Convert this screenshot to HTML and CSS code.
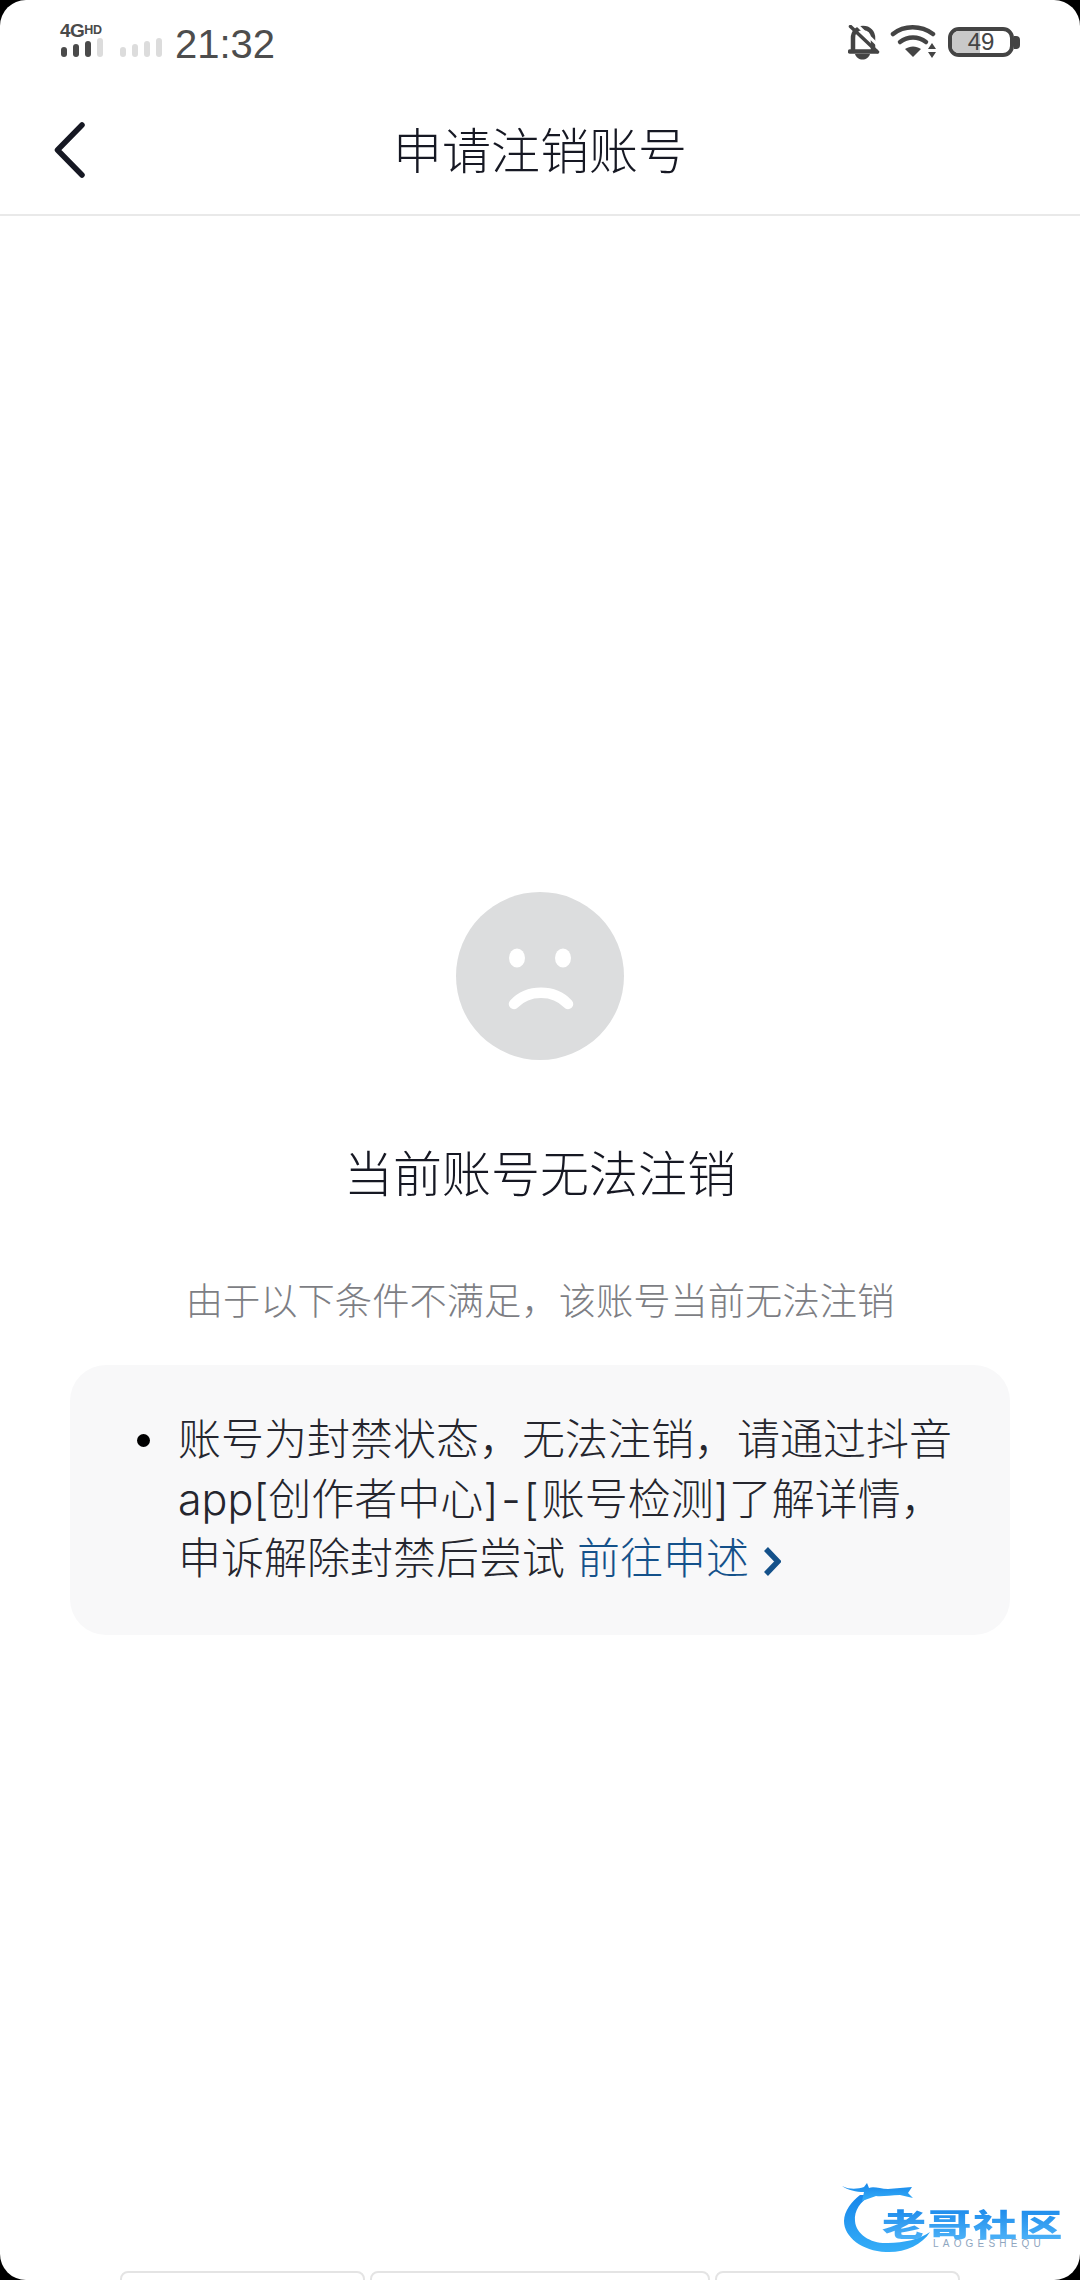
FILE: index.html
```html
<!DOCTYPE html>
<html lang="zh-CN">
<head>
    <meta charset="UTF-8">
    <title>申请注销账号</title>
    <link rel="stylesheet" href="styles.css">
</head>
<body>
    <div class="screen">
        <!-- Status bar -->
        <div class="status-bar">
            <div class="status-left">
                <div class="net">
                    <div class="net-label">4G<span class="net-hd">HD</span></div>
                    <div class="bars">
                        <i class="bar b1"></i><i class="bar b2"></i><i class="bar b3"></i><i class="bar b4 off"></i>
                    </div>
                </div>
                <div class="bars bars-second">
                    <i class="bar b1 off"></i><i class="bar b2 off"></i><i class="bar b3 off"></i><i class="bar b4 off"></i>
                </div>
                <span class="time">21:32</span>
            </div>
            <div class="status-right">
                <svg class="icon-bell" width="32" height="35" viewBox="0 0 32 35">
                    <path d="M5 25V13C5 7 9 3 15 3s10 4 10 10v12" fill="none" stroke="#444" stroke-width="4.5"/>
                    <path d="M2 26.5h26" stroke="#444" stroke-width="4.5" stroke-linecap="round"/>
                    <path d="M7 29h15c-1 3.5-4 5.5-7.5 5.5S8 32.5 7 29z" fill="#444"/>
                    <path d="M8 -1l26 25" stroke="#fff" stroke-width="3"/>
                    <path d="M2.5 1.5L29.5 27" stroke="#444" stroke-width="3.5" stroke-linecap="round"/>
                </svg>
                <svg class="icon-wifi" width="47" height="36" viewBox="0 0 47 36">
                    <path d="M3 10C14 1 31 1 43 10" fill="none" stroke="#444" stroke-width="4.5" stroke-linecap="round"/>
                    <path d="M10 18c8-6 18-6 26 0" fill="none" stroke="#444" stroke-width="4.5" stroke-linecap="round"/>
                    <path d="M15 25c5-3.5 11-3.5 16 0l-8 8z" fill="#444"/>
                    <path d="M42 19l4 6h-8zM42 34l-4-6h8z" fill="#444"/>
                </svg>
                <div class="battery">
                    <div class="battery-body">
                        <div class="battery-level"></div>
                        <span class="battery-num">49</span>
                    </div>
                    <div class="battery-cap"></div>
                </div>
            </div>
        </div>

        <!-- Title bar -->
        <div class="nav-bar">
            <svg class="back" width="36" height="60" viewBox="0 0 36 60">
                <path d="M30 5L5.5 30 30 55" fill="none" stroke="#161823" stroke-width="5.5" stroke-linecap="round" stroke-linejoin="round"/>
            </svg>
            <h1 class="nav-title">申请注销账号</h1>
        </div>

        <div class="content">
            <svg class="face" width="168" height="168" viewBox="0 0 168 168">
                <circle cx="84" cy="84" r="84" fill="#dcddde"/>
                <ellipse cx="61" cy="66" rx="8" ry="9.5" fill="#fff"/>
                <ellipse cx="107" cy="66" rx="8" ry="9.5" fill="#fff"/>
                <path d="M58 112C72 97 98 97 112 112" fill="none" stroke="#fff" stroke-width="10.5" stroke-linecap="round"/>
            </svg>
            <h2 class="result-title">当前账号无法注销</h2>
            <p class="result-desc">由于以下条件不满足，该账号当前无法注销</p>
            <div class="reason-card">
                <ul class="reason-list">
                    <li><div>账号为封禁状态，无法注销，请通过抖音<br>app[创作者中心<span class="sep">]-[</span>账号检测]了解详情，<br>申诉解除封禁后尝试 <a class="appeal-link">前往申述<svg class="chevron" width="18" height="31" viewBox="0 0 18 31"><path d="M3 3l12 12.5L3 28" fill="none" stroke="#14518a" stroke-width="5.5"/></svg></a></div></li>
                </ul>
            </div>
        </div>

        <!-- Cut off by the bottom edge of the screen -->
        <div class="bottom-tabs">
            <div class="tab tab-a"></div>
            <div class="tab tab-b"></div>
            <div class="tab tab-c"></div>
        </div>

        <div class="watermark">
            <svg class="dragon" width="90" height="72" viewBox="0 0 90 72">
                <defs>
                    <linearGradient id="dragonBlue" x1="0" y1="0" x2="0" y2="1">
                        <stop offset="0" stop-color="#1786ea"/>
                        <stop offset="1" stop-color="#35aef8"/>
                    </linearGradient>
                </defs>
                <path d="M30 12C18 18 12 28 13 38c1 14 17 23 33 22 16 0 32-4 42-11-8 13-26 21-44 20C20 68 2 54 2 38c0-10 8-20 16-26z" fill="url(#dragonBlue)"/>
                <path d="M0 3c8 4 16 3 22 1l3-4 2 5c5-2 11 1 19 1l24-2-4 6 5 5-13-3c-10 0-18 2-24 1l-14 5 2-9C14 9 6 7 0 3z" fill="url(#dragonBlue)"/>
            </svg>
            <div class="wm-text">
                <div class="wm-name">老哥社区</div>
                <div class="wm-sub">LAOGESHEQU</div>
            </div>
        </div>
    </div>
</body>
</html>
```

FILE: styles.css
```css
* {
    box-sizing: border-box;
    margin: 0;
    padding: 0;
}

body {
    width: 1080px;
    height: 2280px;
    background-color: #000;
    overflow: hidden;
    font-family: Inter, "Noto Sans CJK SC", sans-serif;
}

.screen {
    position: relative;
    width: 1080px;
    height: 2280px;
    background-color: #fff;
    border-radius: 26px;
    overflow: hidden;
    display: flex;
    flex-direction: column;
}

/* Status bar */
.status-bar {
    height: 85px;
    padding: 23px 60px 0 60px;
    display: flex;
    justify-content: space-between;
    align-items: flex-start;
    color: #4a4a4a;
}

.status-left {
    display: flex;
    align-items: flex-start;
}

.net {
    width: 59px;
}

.net-label {
    font-family: "Liberation Sans", sans-serif;
    font-weight: 700;
    font-size: 19px;
    line-height: 15px;
    letter-spacing: -0.5px;
    white-space: nowrap;
    color: #4a4a4a;
}

.net-hd {
    font-size: 12.5px;
    vertical-align: 3px;
}

.bars {
    display: flex;
    align-items: flex-end;
    gap: 6px;
    height: 19px;
    padding-left: 1px;
}

.bars-second {
    width: 56px;
    margin-top: 15px;
}

.bar {
    display: block;
    width: 6px;
    border-radius: 3px;
    background-color: #4a4a4a;
}

.bar.off {
    background-color: #dcdcdc;
}

.b1 { height: 10px; }
.b2 { height: 13px; }
.b3 { height: 16px; }
.b4 { height: 19px; }

.time {
    font-family: "Liberation Sans", sans-serif;
    font-size: 40px;
    line-height: 40px;
    color: #4d4d4d;
    margin-top: 1px;
}

.status-right {
    display: flex;
    align-items: center;
    height: 36px;
    margin-top: 1px;
}

.icon-bell {
    margin-right: 10px;
}

.icon-wifi {
    margin-right: 11px;
}

.battery {
    display: flex;
    align-items: center;
}

.battery-body {
    position: relative;
    width: 66px;
    height: 30px;
    border: 4px solid #444;
    border-radius: 11px;
    overflow: hidden;
}

.battery-level {
    width: 49%;
    height: 100%;
    background-color: #c9c9c9;
}

.battery-num {
    position: absolute;
    top: 0;
    left: 0;
    width: 100%;
    text-align: center;
    font-family: "Liberation Sans", sans-serif;
    font-size: 24px;
    line-height: 22px;
    color: #444;
}

.battery-cap {
    width: 6px;
    height: 13px;
    background-color: #444;
    border-radius: 0 4px 4px 0;
}

/* Title bar */
.nav-bar {
    position: relative;
    height: 131px;
    border-bottom: 2px solid #e9e9e9;
    display: flex;
    align-items: center;
    justify-content: center;
}

.back {
    position: absolute;
    left: 52px;
    top: 35px;
}

.nav-title {
    margin-top: 5px;
    font-size: 49px;
    font-weight: 300;
    color: #161823;
    line-height: 60px;
}

/* Result */
.content {
    flex: 1;
    padding-top: 676px;
    display: flex;
    flex-direction: column;
    align-items: center;
}

.result-title {
    margin-top: 83px;
    font-size: 49px;
    font-weight: 300;
    line-height: 64px;
    color: #161823;
}

.result-desc {
    margin-top: 70px;
    font-size: 37.3px;
    font-weight: 300;
    line-height: 50px;
    color: #7d7e84;
}

.reason-card {
    margin-top: 38px;
    width: 940px;
    height: 270px;
    padding: 45px 40px 0 67px;
    background-color: #f8f8f9;
    border-radius: 36px;
}

.reason-list {
    list-style: none;
    font-size: 43px;
    font-weight: 300;
    line-height: 59.5px;
    color: #25262e;
}

.reason-list li {
    display: flex;
    gap: 28px;
}

.reason-list li::before {
    content: "";
    flex: none;
    width: 13px;
    height: 13px;
    margin-top: 24px;
    border-radius: 50%;
    background-color: #000;
}

.sep {
    letter-spacing: 3px;
}

.appeal-link {
    color: #14518a;
}

.chevron {
    margin-left: 14px;
    vertical-align: -3px;
}

/* Row of buttons at the bottom edge */
.bottom-tabs {
    height: 9px;
    display: flex;
    padding-left: 120px;
    gap: 5px;
}

.tab {
    height: 30px;
    background-color: #fff;
    border: 2px solid #e4e4e4;
    border-radius: 8px;
}

.tab-a { width: 245px; }
.tab-b { width: 340px; }
.tab-c { width: 245px; }

/* Watermark */
.watermark {
    position: absolute;
    left: 842px;
    top: 2183px;
    width: 222px;
    height: 72px;
}

.dragon {
    display: block;
}

.wm-text {
    position: absolute;
    left: 40px;
    top: 25px;
}

.wm-name {
    font-family: "Noto Sans CJK SC", sans-serif;
    font-weight: 900;
    font-size: 44px;
    line-height: 30px;
    letter-spacing: 1.5px;
    white-space: nowrap;
    padding: 12px 0;
    margin: -12px 0;
    background: linear-gradient(#1786ea, #4fb4f8);
    -webkit-background-clip: text;
    background-clip: text;
    color: transparent;
    transform: scaleY(0.7);
}

.wm-sub {
    font-family: "Liberation Sans", sans-serif;
    font-size: 10px;
    line-height: 10px;
    letter-spacing: 4.2px;
    color: #8fa6c0;
    padding-left: 51px;
    margin-top: 1px;
}
```
